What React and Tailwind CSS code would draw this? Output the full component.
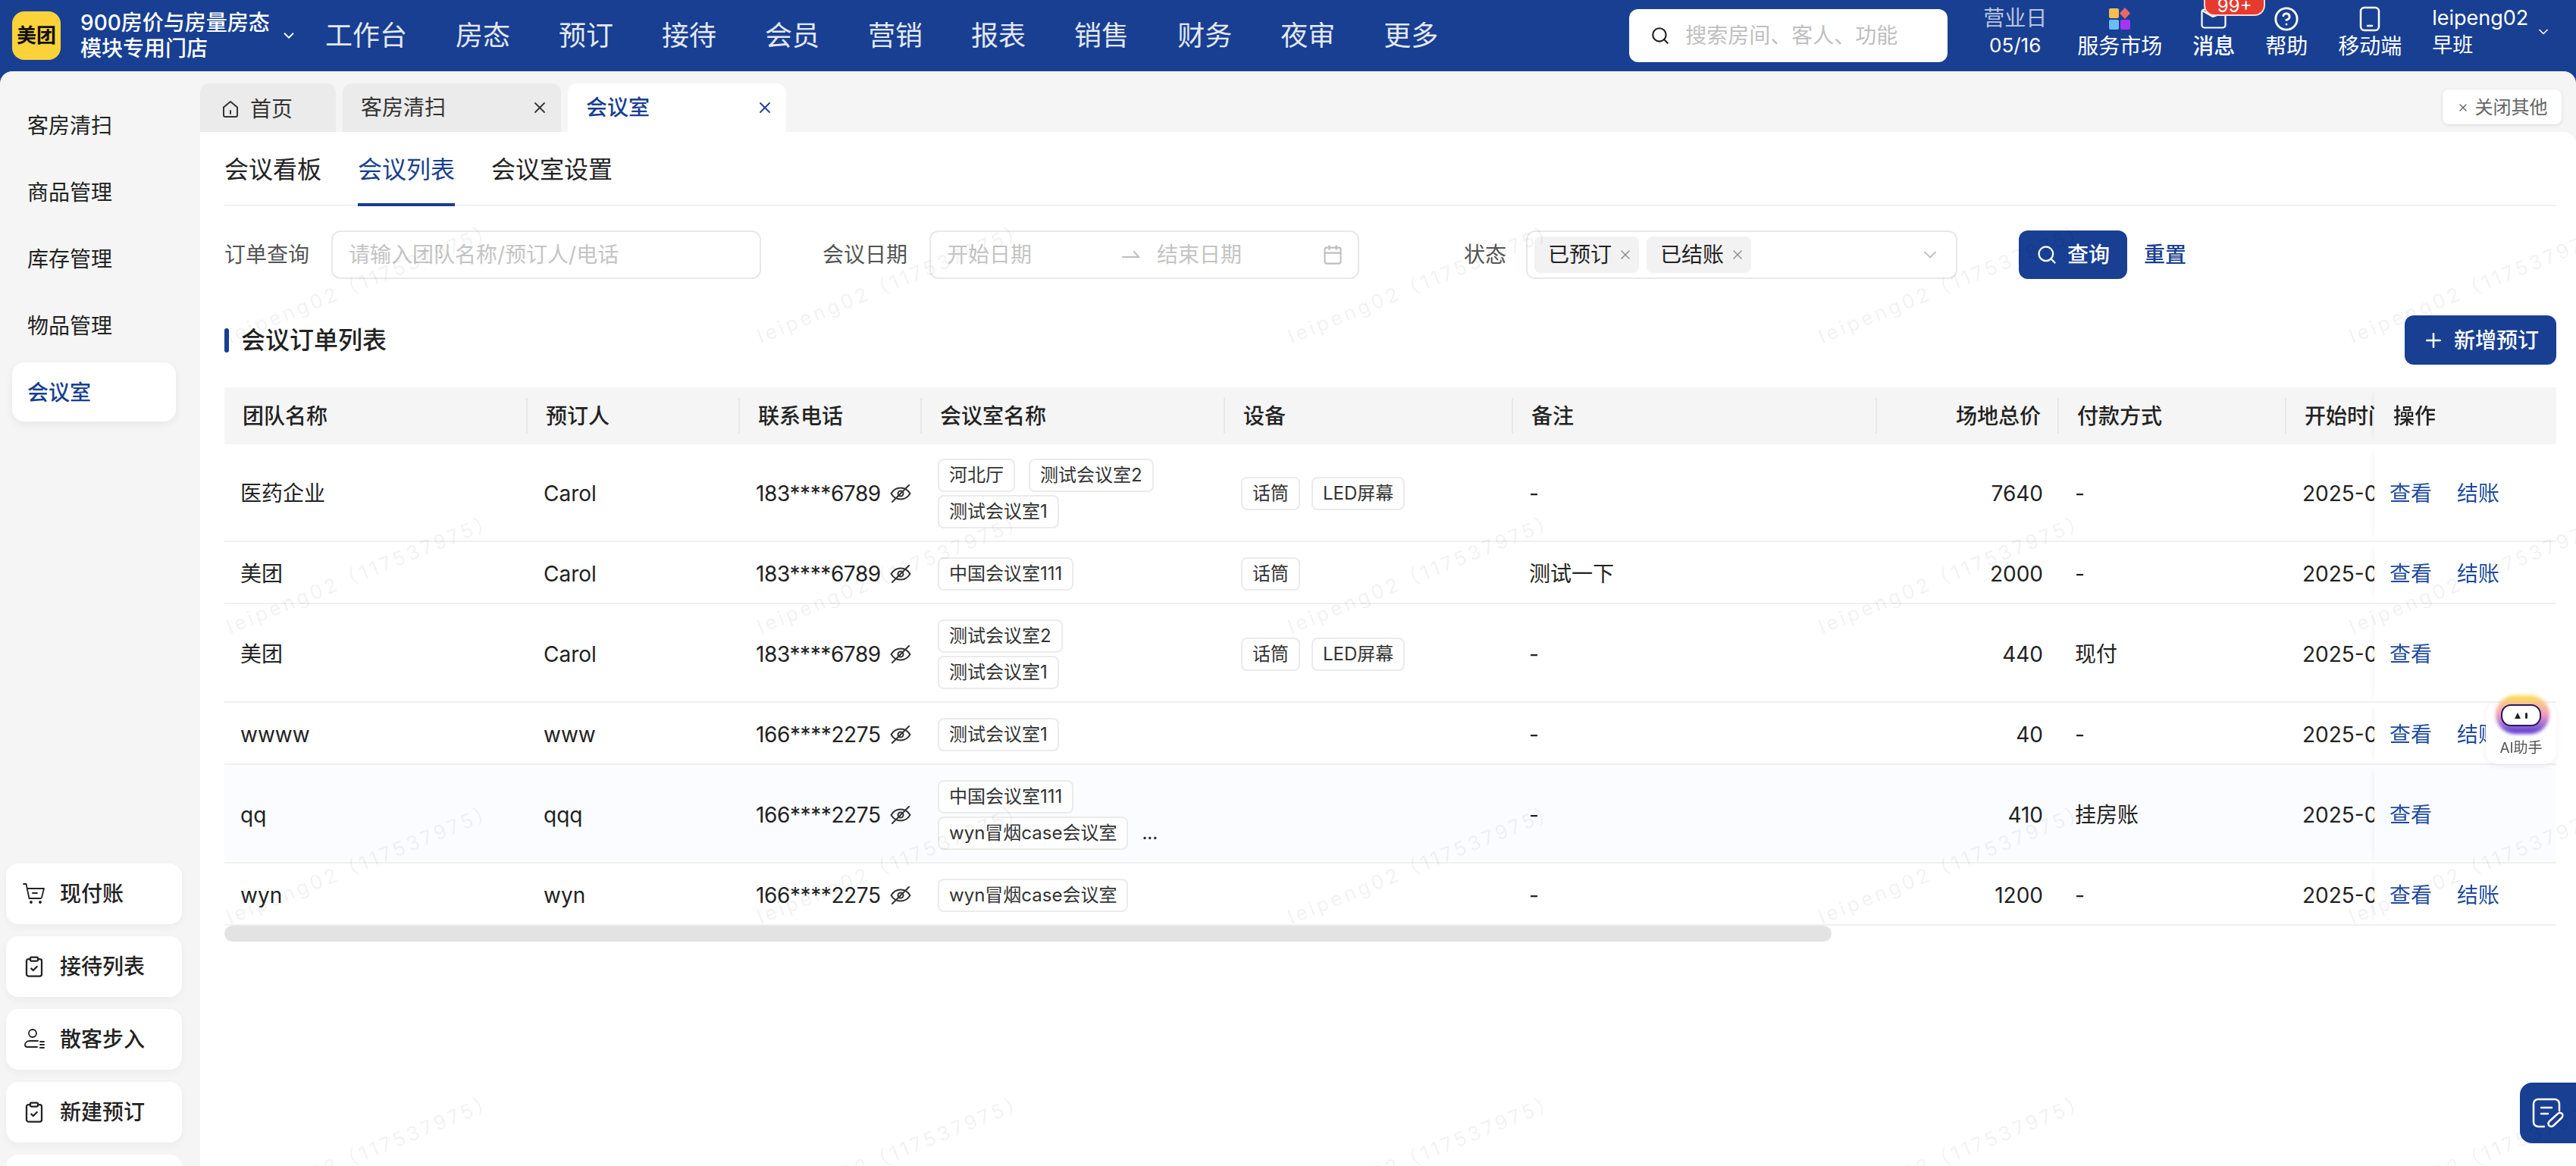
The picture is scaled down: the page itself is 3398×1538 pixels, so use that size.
import React from "react";
import { ChevronDown, X, Search, Calendar, Plus, CircleHelp, ClipboardCheck } from "lucide-react";

const navItems = ["房态", "预订", "接待", "会员", "营销", "报表", "销售", "财务", "夜审", "更多"];
const sideItems = ["客房清扫", "商品管理", "库存管理", "物品管理"];

const columns = [
  { label: "团队名称", width: 400 },
  { label: "预订人", width: 280 },
  { label: "联系电话", width: 240 },
  { label: "会议室名称", width: 400 },
  { label: "设备", width: 380 },
  { label: "备注", width: 480 },
  { label: "场地总价", width: 240, right: true },
  { label: "付款方式", width: 300 },
  { label: "开始时间", width: 360 },
];

const rows = [
  { team: "医药企业", person: "Carol", phone: "183****6789", rooms: ["河北厅", "测试会议室2", "测试会议室1"], devices: ["话筒", "LED屏幕"], note: "-", price: 7640, pay: "-", checkout: true, h: "h-[129px]" },
  { team: "美团", person: "Carol", phone: "183****6789", rooms: ["中国会议室111"], devices: ["话筒"], note: "测试一下", price: 2000, pay: "-", checkout: true, h: "h-[82px]" },
  { team: "美团", person: "Carol", phone: "183****6789", rooms: ["测试会议室2", "测试会议室1"], devices: ["话筒", "LED屏幕"], note: "-", price: 440, pay: "现付", h: "h-[130px]" },
  { team: "wwww", person: "www", phone: "166****2275", rooms: ["测试会议室1"], devices: [], note: "-", price: 40, pay: "-", checkout: true, h: "h-[82px]" },
  { team: "qq", person: "qqq", phone: "166****2275", rooms: ["中国会议室111", "wyn冒烟case会议室"], devices: [], note: "-", price: 410, pay: "挂房账", more: true, tint: true, h: "h-[130px]" },
  { team: "wyn", person: "wyn", phone: "166****2275", rooms: ["wyn冒烟case会议室"], devices: [], note: "-", price: 1200, pay: "-", checkout: true, h: "h-[82px]" },
];

const EyeSlash = () => (
  <svg width="28" height="24" viewBox="0 0 28 24" fill="none" stroke="#333" strokeWidth="2" strokeLinecap="round" className="shrink-0">
    <path d="M1.500 12c3-5 7-7.500 12.500-7.500S23.500 7 26.500 12c-3 5-7 7.500-12.500 7.500S4.500 17 1.500 12z" />
    <circle cx="14" cy="12" r="3.500" />
    <path d="M25 1 3 23" />
  </svg>
);

const HomeIcon = () => (
  <svg width="24" height="26" viewBox="0 0 24 26" fill="none" stroke="#333" strokeWidth="2" strokeLinejoin="round" strokeLinecap="round">
    <path d="M3 10.500 12 3l9 7.500V21a2 2 0 0 1-2 2H5a2 2 0 0 1-2-2z" />
    <path d="M12 15v4" />
  </svg>
);

const CartIcon = () => (
  <svg width="30" height="30" viewBox="0 0 30 30" fill="none" stroke="#222" strokeWidth="1.800" strokeLinecap="round" strokeLinejoin="round">
    <path d="M1 2h3.500l4 19h15.500" />
    <path d="M6 8h22l-3 12" />
    <path d="M13 14h6" />
    <circle cx="11" cy="26" r="1" fill="#222" />
    <circle cx="23" cy="26" r="1" fill="#222" />
  </svg>
);

const GuestIcon = () => (
  <svg width="30" height="30" viewBox="0 0 30 30" fill="none" stroke="#222" strokeWidth="1.800" strokeLinecap="round">
    <circle cx="13" cy="7" r="5" />
    <path d="M20 17H9c-3 0-6 2-6 5 0 2 1 3 3 3h13" />
    <path d="M23 18h5M23 22h5M23 26h5" />
  </svg>
);

const NoteIcon = () => (
  <svg width="42" height="40" viewBox="0 0 42 40" fill="none" stroke="#fff" strokeWidth="2.500" strokeLinecap="round" strokeLinejoin="round">
    <path d="M36 17V8a6 6 0 0 0-6-6H8a6 6 0 0 0-6 6v24a6 6 0 0 0 6 6h8" />
    <path d="M12 13h14M12 21h9" />
    <path d="M22 36c-1-2 0-4 1-5l11-10c2-1.500 4-1.500 5.500 0s1 4-.5 5.500L28 37c-2 1.500-5 1-6-1z" />
  </svg>
);

const AppsIcon = () => (
  <svg width="29" height="29" viewBox="0 0 29 29">
    <rect x="0" y="1" width="13" height="13" rx="2" fill="#f6bd4f" />
    <path d="M21 0l7 7.500-7 7.500-7-7.500z" fill="#e8686a" />
    <rect x="0" y="16" width="13" height="13" rx="2" fill="#6ebcf7" />
    <rect x="15" y="16" width="13" height="13" rx="2" fill="#a535f0" />
  </svg>
);

const MessageIcon = () => (
  <svg width="34" height="27" viewBox="0 0 34 27" fill="none" stroke="#fff" strokeWidth="2.200" strokeLinecap="round">
    <rect x="1.500" y="1.500" width="31" height="24" rx="3.500" />
    <path d="M2 3l14 8 8-3" />
  </svg>
);

const PhoneIcon = () => (
  <svg width="28" height="34" viewBox="0 0 28 34" fill="none" stroke="#fff" strokeWidth="2.500" strokeLinecap="round">
    <rect x="2" y="2" width="24" height="30" rx="5" />
    <path d="M11 26h6" />
  </svg>
);

const HalfArrow = () => (
  <svg width="24" height="14" viewBox="0 0 24 14" fill="none" stroke="#bfbfbf" strokeWidth="2" strokeLinecap="round">
    <path d="M1 10h21l-6-7" />
  </svg>
);

const Tag = ({ children }) => (
  <span className="h-[44px] px-[13px] flex items-center border-2 border-[#ebebeb] rounded-lg text-[24px] text-[#333] whitespace-nowrap bg-white/70">
    {children}
  </span>
);

const Watermarks = () => {
  const marks = [];
  for (let i = 0; i < 30; i++) marks.push(i);
  return (
    <div className="absolute left-[-395px] top-[74px] w-[4200px] grid grid-cols-[repeat(6,700px)] auto-rows-[383px] pointer-events-none z-30">
      {marks.map((i) => (
        <div key={i} className="self-end h-0 origin-bottom-left -rotate-[22deg] whitespace-nowrap text-[26px] leading-none tracking-[4px] text-black/[0.05]">
          <span className="block -translate-y-full">leipeng02（117537975）</span>
        </div>
      ))}
    </div>
  );
};

const Header = () => (
  <div className="h-[94px] shrink-0 flex items-center pl-4 text-white">
    <div className="w-[64px] h-[64px] rounded-2xl bg-[#fbd23a] flex items-center justify-center text-[26px] font-bold text-[#111] leading-none">
      美团
    </div>
    <div className="ml-[26px] w-[256px] text-[28px] leading-[34px] font-medium">
      <div>900房价与房量房态</div>
      <div>模块专用门店</div>
    </div>
    <ChevronDown size={22} strokeWidth={2} className="ml-[8px] text-white" />
    <div className="ml-[37px] flex gap-[64px] text-[36px] text-[#e3e8f3] leading-none">
      <span>工作台</span>
      {navItems.map((item) => (
        <span key={item}>{item}</span>
      ))}
    </div>
    <div className="ml-[252px] w-[420px] h-[70px] bg-white rounded-xl flex items-center pl-7 gap-[20px]">
      <Search size={26} strokeWidth={2} className="text-[#222]" />
      <span className="text-[28px] text-[#bfbfbf]">搜索房间、客人、功能</span>
    </div>
    <div className="ml-[47px] h-full flex gap-[40px]">
      <div className="pt-[6px] text-[26px] leading-[36px] text-center w-[84px]">
        <div className="text-[28px] text-[#b9c5de]">营业日</div>
        <div>05/16</div>
      </div>
      <div className="pt-[8px] flex flex-col items-center text-[28px] leading-[34px]">
        <div className="h-[36px] pt-[2px]"><AppsIcon /></div>
        <span>服务市场</span>
      </div>
      <div className="relative pt-[8px] flex flex-col items-center text-[28px] leading-[34px]">
        <div className="h-[36px] pt-[3px]"><MessageIcon /></div>
        <span className="font-medium">消息</span>
        <span className="absolute left-[15px] top-[-14px] w-[81px] h-[35px] pt-[7px] rounded-[14px] bg-[#e63a2e] border-2 border-white/80 text-[24px] leading-[26px] text-center">99+</span>
      </div>
      <div className="pt-[8px] flex flex-col items-center text-[28px] leading-[34px]">
        <div className="h-[36px]"><CircleHelp size={34} strokeWidth={2} /></div>
        <span>帮助</span>
      </div>
      <div className="pt-[8px] flex flex-col items-center text-[28px] leading-[34px]">
        <div className="h-[36px]"><PhoneIcon /></div>
        <span>移动端</span>
      </div>
      <div className="pt-[6px] text-[27px] leading-[36px] relative w-[160px]">
        <div>leipeng02</div>
        <div>早班</div>
        <ChevronDown size={20} strokeWidth={2} className="absolute left-[137px] top-[32px]" />
      </div>
    </div>
  </div>
);

const SideButton = ({ icon, label }) => (
  <div className="h-[80px] shrink-0 pl-[22px] flex items-center gap-[19px] bg-white rounded-2xl shadow-[0_4px_12px_rgba(0,0,0,0.04)] font-medium">
    {icon}
    <span>{label}</span>
  </div>
);

const Sidebar = () => (
  <div className="w-[264px] shrink-0 pt-[32px] text-[28px] text-[#222]">
    <div className="pl-4 pr-8 flex flex-col gap-[10px]">
      {sideItems.map((item) => (
        <div key={item} className="h-[78px] pl-5 pt-[2px] flex items-center">{item}</div>
      ))}
      <div className="h-[78px] pl-5 pt-[2px] flex items-center bg-white rounded-2xl shadow-[0_4px_12px_rgba(0,0,0,0.06)] text-[#183f92] font-medium">
        会议室
      </div>
    </div>
    <div className="mt-[583px] pl-2 pr-6 flex flex-col gap-4">
      <SideButton icon={<CartIcon />} label="现付账" />
      <SideButton icon={<ClipboardCheck size={30} strokeWidth={1.8} />} label="接待列表" />
      <SideButton icon={<GuestIcon />} label="散客步入" />
      <SideButton icon={<ClipboardCheck size={30} strokeWidth={1.8} />} label="新建预订" />
      <div className="h-[80px] shrink-0 bg-white rounded-2xl" />
    </div>
  </div>
);

const TabStrip = () => (
  <div className="h-[80px] shrink-0 flex items-start pt-4 gap-[9px] relative text-[28px] text-[#333]">
    <div className="w-[179px] h-[64px] pt-[4px] bg-[#ebebeb] rounded-t-xl flex items-center pl-[28px] gap-[14px]">
      <HomeIcon />
      <span>首页</span>
    </div>
    <div className="w-[288px] h-[64px] bg-[#ebebeb] rounded-t-xl flex items-center justify-between pl-6 pr-[16px]">
      <span>客房清扫</span>
      <X size={24} strokeWidth={1.8} />
    </div>
    <div className="w-[288px] h-[64px] bg-white rounded-t-xl flex items-center justify-between pl-6 pr-[16px] text-[#183f92] font-medium">
      <span>会议室</span>
      <X size={24} strokeWidth={1.8} />
    </div>
    <div className="ml-auto mr-[19px] mt-[8px] w-[157px] h-[46px] pt-[1px] bg-white rounded-lg shadow-[0_1px_4px_rgba(0,0,0,0.12)] flex items-center justify-center gap-2 text-[24px] text-[#666]">
      <X size={16} strokeWidth={2} />
      <span>关闭其他</span>
    </div>
  </div>
);

const Filters = () => (
  <div className="mt-8 h-[64px] flex items-center text-[28px] text-[#555]">
    <span>订单查询</span>
    <div className="ml-[29px] w-[567px] h-[64px] border-2 border-[#e8e8e8] rounded-xl flex items-center pl-[21px] text-[#c4c4c4]">
      请输入团队名称/预订人/电话
    </div>
    <span className="ml-[81px]">会议日期</span>
    <div className="ml-[29px] w-[567px] h-[64px] border-2 border-[#e8e8e8] rounded-xl flex items-center pl-[21px] text-[#c4c4c4]">
      <span className="w-[231px]">开始日期</span>
      <HalfArrow />
      <span className="ml-[22px]">结束日期</span>
      <Calendar size={28} strokeWidth={1.8} className="ml-[106px] text-[#bfbfbf]" />
    </div>
    <span className="ml-[138px]">状态</span>
    <div className="ml-[26px] w-[569px] h-[64px] border-2 border-[#e8e8e8] rounded-xl flex items-center pl-[9px] gap-[10px] text-[#222]">
      {["已预订", "已结账"].map((item) => (
        <span key={item} className="w-[138px] h-[48px] bg-[#f2f2f2] rounded-lg flex items-center pl-[18px] gap-[8px]">
          {item}
          <X size={20} strokeWidth={1.6} className="text-[#888]" />
        </span>
      ))}
      <ChevronDown size={28} strokeWidth={1.6} className="ml-auto mr-[20px] text-[#bfbfbf]" />
    </div>
    <button className="ml-[81px] w-[143px] h-[64px] rounded-xl bg-[#183f92] text-white font-medium flex items-center justify-center gap-[13px]">
      <Search size={28} strokeWidth={2} />
      <span>查询</span>
    </button>
    <span className="ml-[22px] text-[#183f92] font-medium">重置</span>
  </div>
);

const OrderTable = () => (
  <div className="mt-[30px] overflow-hidden">
    <table className="table-fixed w-[3320px] border-separate border-spacing-0 text-[28px] text-[#222]">
      <colgroup>
        {columns.map((col) => (
          <col key={col.label} style={{ width: col.width }} />
        ))}
        <col style={{ width: 240 }} />
      </colgroup>
      <thead>
        <tr>
          {columns.map((col, i) => (
            <th
              key={col.label}
              className={`relative h-[75px] bg-[#f5f5f5] px-6 font-medium whitespace-nowrap after:absolute after:right-0 after:top-[14px] after:bottom-[14px] after:w-[2px] after:bg-[#e8e8e8] ${col.right ? "text-right" : "text-left"} ${i === 8 ? "after:hidden" : ""}`}
            >
              {col.label}
            </th>
          ))}
          <th className="sticky right-0 z-10 h-[75px] bg-[#f5f5f5] pl-[25px] text-left font-medium shadow-[-8px_0_8px_-8px_rgba(0,0,0,0.07)]">
            操作
          </th>
        </tr>
      </thead>
      <tbody>
        {rows.map((row, i) => {
          const cell = `${row.h} pl-[21px] pt-[3px] border-b-2 border-[#f0f0f0] whitespace-nowrap ${row.tint ? "bg-[#fafcff]" : "bg-white"}`;
          return (
            <tr key={i}>
              <td className={cell}>{row.team}</td>
              <td className={cell}>{row.person}</td>
              <td className={cell}>
                <div className="flex items-center gap-3 tracking-[-0.4px]">
                  {row.phone}
                  <EyeSlash />
                </div>
              </td>
              <td className={cell}>
                <div className="max-w-[320px] flex flex-wrap items-center gap-x-[18px] gap-y-1">
                  {row.rooms.map((room) => (
                    <Tag key={room}>{room}</Tag>
                  ))}
                  {row.more && <span className="text-[24px] leading-none">...</span>}
                </div>
              </td>
              <td className={cell}>
                <div className="flex gap-x-[15px]">
                  {row.devices.map((device) => (
                    <Tag key={device}>{device}</Tag>
                  ))}
                </div>
              </td>
              <td className={cell}>{row.note}</td>
              <td className={`${cell} text-right pr-[21px]`}>{row.price}</td>
              <td className={cell}>{row.pay}</td>
              <td className={cell}>2025-05-16 09:00</td>
              <td className={`${cell} sticky right-0 z-10 shadow-[-8px_0_8px_-8px_rgba(0,0,0,0.07)] text-[#1f4a9e]`}>
                <div className="flex gap-[33px] -ml-[1px]">
                  <span>查看</span>
                  {row.checkout && <span>结账</span>}
                </div>
              </td>
            </tr>
          );
        })}
      </tbody>
    </table>
    <div className="w-[2120px] h-[21px] rounded-full bg-[#e3e3e3]" />
  </div>
);

export default function App() {
  return (
    <div className="relative w-full h-[1538px] overflow-hidden flex flex-col bg-[#183f92] font-['Inter','Noto_Sans_CJK_SC',sans-serif]">
      <Header />
      <div className="flex-1 flex min-h-0 bg-[#f5f5f5] rounded-t-2xl overflow-hidden">
        <Sidebar />
        <div className="flex-1 min-w-0 flex flex-col">
          <TabStrip />
          <div className="flex-1 bg-white rounded-tr-2xl pl-8 pr-[26px]">
            <div className="h-[98px] border-b-2 border-[#f0f0f0] flex gap-12 text-[32px] leading-[36px] text-[#222]">
              <div className="h-[98px] pt-8">会议看板</div>
              <div className="h-[98px] pt-8 border-b-4 border-[#183f92] text-[#183f92]">会议列表</div>
              <div className="h-[98px] pt-8">会议室设置</div>
            </div>
            <Filters />
            <div className="mt-12 h-[65px] flex items-center justify-between">
              <div className="flex items-center gap-4 text-[32px] font-medium text-[#222]">
                <span className="w-[6px] h-[32px] rounded-full bg-[#183f92]" />
                会议订单列表
              </div>
              <button className="w-[200px] h-[65px] rounded-xl bg-[#183f92] text-white text-[28px] font-medium flex items-center justify-center gap-[12px]">
                <Plus size={30} strokeWidth={2} />
                新增预订
              </button>
            </div>
            <OrderTable />
          </div>
        </div>
      </div>

      {/* AI 助手 */}
      <div className="absolute right-[26px] top-[917px] w-[93px] h-[91px] z-20">
        <div className="absolute inset-x-0 top-[10px] bottom-0 bg-white rounded-2xl shadow-[0_2px_8px_rgba(0,0,0,0.07)]" />
        <div className="absolute left-[13px] top-0 w-[71px] h-[51px] rounded-[26px] bg-gradient-to-b from-[#fde047] via-[#f29ac0] to-[#5b2fd6] blur-[2px]" />
        <div className="absolute left-[20px] top-[12px] w-[53px] h-[29px] rounded-[13px] border-2 border-[#2a1a5e] bg-white flex items-center justify-center gap-[6px]">
          <span className="w-0 h-0 border-x-[4px] border-x-transparent border-b-[8px] border-b-[#222]" />
          <span className="w-[3px] h-[8px] rounded-full bg-[#222]" />
        </div>
        <div className="absolute inset-x-0 top-[57px] text-center text-[19px] leading-[26px] text-[#555]">AI助手</div>
      </div>

      <div className="absolute right-0 top-[1428px] w-[74px] h-[80px] rounded-l-2xl bg-[#183f92] flex items-center justify-center z-20">
        <NoteIcon />
      </div>

      <Watermarks />
    </div>
  );
}
